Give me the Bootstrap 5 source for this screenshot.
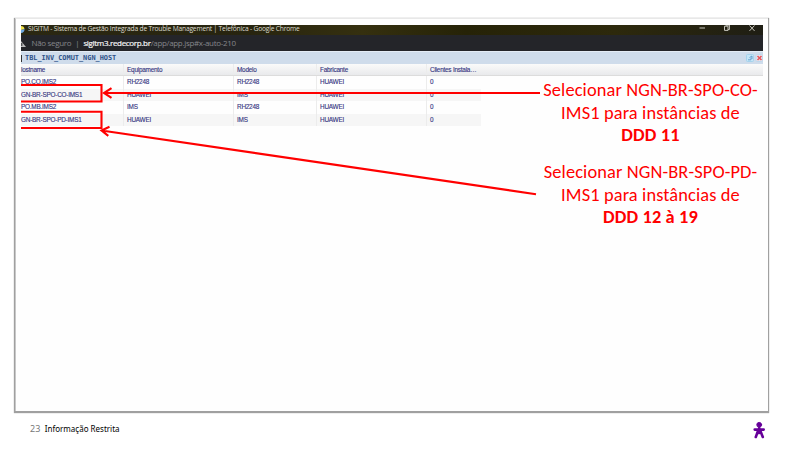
<!DOCTYPE html>
<html lang="pt-BR">
<head>
<meta charset="utf-8">
<meta name="viewport" content="width=device-width, initial-scale=1">
<title>TBL_INV_COMUT_NGN_HOST</title>
<link href="https://cdn.jsdelivr.net/npm/bootstrap@5.3.0/dist/css/bootstrap.min.css" rel="stylesheet">
<style>
body{width:800px;height:450px;font-family:"Liberation Sans",Arial,sans-serif;color:#000}
.slide{width:800px;height:450px;padding:18px 0 0 15px}
.frame{width:753px;height:393px;padding:6px 5px 0 5px;background:#fefefe;border-top:1px solid #e8e8e8;border-left:1px solid #c8c8c8;box-shadow:0 1px 1px 1px #a0a0a0}
.titlebar{height:10px;font:6.7px/8.6px "Open Sans",sans-serif;letter-spacing:-.2px;color:#dedcd0;background:linear-gradient(90deg,#2b2812,#27240f 30%,#35300f 46%,#262307 60%,#2d290c 80%,#1f1e14)}
.urlbar{height:16px;font:8px/16px "Open Sans",sans-serif;letter-spacing:-.32px;color:#85868a;background:#242529}
.domain{color:#f4f4f4;-webkit-text-stroke:.2px #f4f4f4}
.panelbar{height:13px;background:#cfdceb;color:#2d5188;font:bold 6.9px/13px "DejaVu Sans Mono",monospace;border-top:1px solid #e4ecf5}
.tick{width:1px;height:7px;background:#333;margin-right:3px}
.headrow{height:12px;line-height:12px;background:linear-gradient(#fafafa,#e9eaec);border-bottom:1px solid #dcdcdc}
.hosts{font-size:6.4px;letter-spacing:-.22px;color:#34347e;white-space:nowrap;-webkit-text-stroke:.12px #34347e}
.hostrow{width:460px;height:12.6px;line-height:12.4px}
.hostrow.alt{background:#f6f6f6}
.c1{width:102px}.c2{width:110px}.c3{width:83px}.c4{width:110px}.c5{width:55px}
.hostrow .c1{letter-spacing:-.22px}
.c2,.c3,.c4,.c5{padding-left:3px;border-left:1px solid #ececec}
.note{width:230px;font:18.4px/22.6px "Carlito","Lato",sans-serif;letter-spacing:.12px;color:#f00;white-space:nowrap}
.note1{left:535.5px;top:79px}
.note2{left:535.5px;top:161px}
.footline{padding:12px 0 0 15px;height:32px;font:8px/12px "Noto Sans",sans-serif}
.pageno{font-size:9px;margin-right:4.5px;color:#777}
.person{margin-top:-2px}
</style>
<script src="https://cdn.jsdelivr.net/npm/bootstrap@5.3.0/dist/js/bootstrap.bundle.min.js"></script>
</head>
<body class="bg-white overflow-hidden">
<main class="slide position-relative">
  <section class="frame">
    <div class="titlebar d-flex overflow-hidden">
      <svg width="7" height="10" viewBox="0 0 7 10"><path d="M0 1A3.500 3.500 0 0 1 3.500 4L0 5z" fill="#f2e34a"/><path d="M3.500 4A3.500 3.500 0 0 1 0 8V5z" fill="#6fa9e0"/></svg>
      <span class="text-nowrap">SIGITM - Sistema de Gestão Integrada de Trouble Management | Telefônica - Google Chrome</span>
      <svg class="ms-auto" width="64" height="9" viewBox="699 25.500 64 9" fill="none" stroke="#c9c8bf" stroke-width="1"><path d="M699.500 28.500h5.500M724.500 26.700h3.500v4.200h-3.500zM726 26.200v-.6h3.400v4.500H728M749.500 26l5 5.400M754.500 26l-5 5.400"/></svg>
    </div>
    <div class="urlbar d-flex align-items-center">
      <svg width="10.500" height="16" viewBox="0 0 10.500 16"><path d="M-.5 5.500L5 12H0" fill="#bbb"/><path d="M.8 8v3" stroke="#242529"/></svg>
      <span>Não seguro</span><span class="ps-1 pe-1">|</span><span><span class="domain">sigitm3.redecorp.br</span>/app/app.jsp#x-auto-210</span>
    </div>
    <div class="panelbar d-flex align-items-center">
      <span class="tick"></span><span>TBL_INV_COMUT_NGN_HOST</span>
      <svg class="ms-auto" width="17" height="10" viewBox="0 0 17 10"><rect x=".5" y="1.500" width="7" height="7" rx="1" fill="#c4e5f7" stroke="#a5d3ed"/><path d="M2 6.800h3V4.500M3.500 4.500L6 3v3" fill="none" stroke="#5796c6" stroke-width=".8"/><rect x="10" y="1.500" width="6.500" height="7" rx="1" fill="#e6e5ee" stroke="#bfd8ec"/><path d="M11.500 3l4 4M15.500 3l-4 4" stroke="#e8555b" stroke-width="1.600"/></svg>
    </div>
    <div class="hosts">
      <div class="headrow d-flex"><span class="c1">lostname</span><span class="c2">Equipamento</span><span class="c3">Modelo</span><span class="c4">Fabricante</span><span class="c5">Clientes Instala…</span></div>
      <div class="hostrow d-flex"><span class="c1">PO.CO.IMS2</span><span class="c2">RH2248</span><span class="c3">RH2248</span><span class="c4">HUAWEI</span><span class="c5">0</span></div>
      <div class="hostrow alt d-flex"><span class="c1">GN-BR-SPO-CO-IMS1</span><span class="c2">HUAWEI</span><span class="c3">IMS</span><span class="c4">HUAWEI</span><span class="c5">0</span></div>
      <div class="hostrow d-flex"><span class="c1">PO.MB.IMS2</span><span class="c2">IMS</span><span class="c3">RH2248</span><span class="c4">HUAWEI</span><span class="c5">0</span></div>
      <div class="hostrow alt d-flex"><span class="c1">GN-BR-SPO-PD-IMS1</span><span class="c2">HUAWEI</span><span class="c3">IMS</span><span class="c4">HUAWEI</span><span class="c5">0</span></div>
    </div>
  </section>
  <svg class="position-absolute top-0 start-0" width="800" height="450" fill="none" stroke="#f00" stroke-width="2.100">
    <path d="M21 85h80.500v16.500H21M21 111.800h80.500v16.200H21"/>
    <path d="M104 93H540M111.500 88.200L104 93l7.500 4.800M101.500 130.500L536 194.200M109.500 126.800L101.500 130.500l6.800 5.300"/>
  </svg>
  <div class="note note1 position-absolute text-center">Selecionar NGN-BR-SPO-CO-<br>IMS1 para instâncias de<br><b>DDD 11</b></div>
  <div class="note note2 position-absolute text-center">Selecionar NGN-BR-SPO-PD-<br>IMS1 para instâncias de<br><b>DDD 12 à 19</b></div>
  <footer class="footline d-flex">
    <span class="pageno">23</span><span>Informação Restrita</span>
    <svg class="person ms-auto" width="47" height="20" viewBox="753 421 47 20"><g fill="#609" stroke="#609" stroke-linecap="round" stroke-linejoin="round"><circle cx="759.200" cy="424.800" r="2.400"/><path d="M754.700 429.600h9M759.200 428v5M757.800 431.500l-2 5.500M760.600 431.500l2.200 5.500" stroke-width="2.600"/></g></svg>
  </footer>
</main>
</body>
</html>
